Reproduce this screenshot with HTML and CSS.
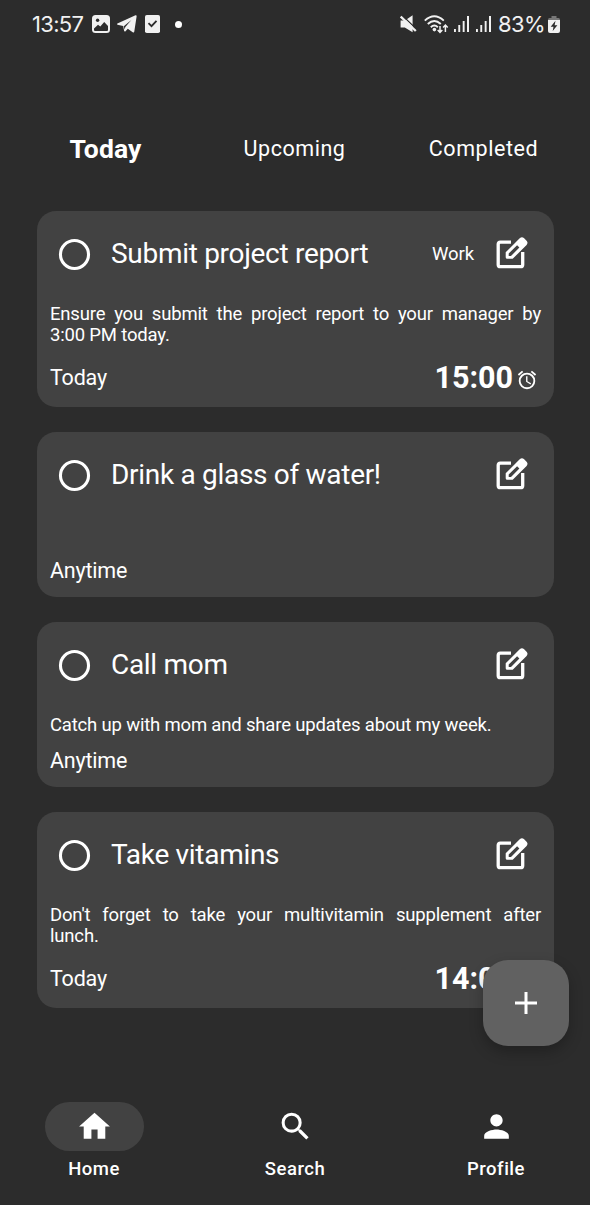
FILE: index.html
```html
<!DOCTYPE html>
<html lang="en">
<head>
<meta charset="utf-8">
<title>Tasks</title>
<link rel="stylesheet" href="styles.css">
</head>
<body>
<svg class="defs" aria-hidden="true">
  <symbol id="ring" viewBox="0 0 24 24"><circle cx="12" cy="12" r="9.1" fill="none" stroke="currentColor" stroke-width="2"/></symbol>
  <symbol id="edit" viewBox="0 0 32 32">
    <path d="M15 5.2H4.3Q2.2 5.2 2.2 7.3V27.7Q2.2 29.7 4.3 29.7H24.6Q26.7 29.7 26.7 27.7V15" fill="none" stroke="currentColor" stroke-width="3.3"/>
    <path fill="currentColor" fill-rule="evenodd" d="M9.7 15.2 23.7 1.2Q25.9-.6 27.9 1L30.8 3.9Q32.3 6 30.6 7.9L16.7 21.8H11.2Q9.7 21.8 9.7 20.3ZM12.7 16.6V18.9H15L23.4 10.5 21.1 8.2Z"/>
  </symbol>
  <symbol id="alarm" viewBox="0 0 24 24"><path fill="currentColor" d="m22 5.72-4.6-3.86-1.29 1.53 4.6 3.86L22 5.72zM7.88 3.39 6.6 1.86 2 5.71l1.29 1.53 4.59-3.85zM12.5 8H11v6l4.75 2.85.75-1.23-4-2.37V8zM12 4a9 9 0 1 0 0 18 9 9 0 0 0 0-18zm0 16a7 7 0 1 1 0-14 7 7 0 0 1 0 14z"/></symbol>
</svg>
<div class="screen">
  <header class="status">
    <div class="status-left">
      <span class="clock">13:57</span>
      <svg class="ic-photo" viewBox="0 0 18 18"><rect width="18" height="18" rx="3.5" fill="currentColor"/><circle cx="5.6" cy="5.3" r="1.7" fill="#2c2c2c"/><path d="M2 13.6 6 9.7 8.3 11.6 12.2 7 16 10.9V15Q16 16 15 16H3Q2 16 2 15Z" fill="#2c2c2c"/></svg>
      <svg class="ic-plane" viewBox="0 0 20 18"><path fill="currentColor" d="M.4 8.6 18.5.3Q19.8 0 19.6 1.4L17.3 16.6Q17 18 15.7 17.3L10.8 13.8 8.3 16.4Q7.4 17 7.1 15.8L6.2 11 .5 9.7Q-.4 9.1.4 8.6Z"/><path d="M6.8 11.2 14.4 5.1 8.3 12 7.7 14.5" fill="#2c2c2c"/></svg>
      <svg class="ic-check" viewBox="0 0 15 18"><rect width="15" height="18" rx="1.8" fill="currentColor"/><path d="m3.5 8.2 3 3 5-5.4" fill="none" stroke="#2c2c2c" stroke-width="1.8"/></svg>
      <span class="dot"></span>
    </div>
    <div class="status-right">
      <svg class="ic-mute" viewBox="0 0 17 18"><path fill="currentColor" d="M.6 5.6H5L12.6.3V17.2L4.8 12.6H.6Z"/><path d="M1.8 0 17 14.6" stroke="#2c2c2c" stroke-width="1.3"/><path d="M.7 1.5 15.8 16" stroke="currentColor" stroke-width="2.3"/></svg>
      <svg class="ic-wifi" viewBox="0 0 25 19"><g fill="none" stroke="currentColor" stroke-width="1.9"><path d="M.8 5.6Q10.3-3 19.8 5.6M3.8 9Q10.3 3 16.8 9M6.8 12.2Q10.3 9 13.8 12.2"/><path stroke-width="1.5" d="M16 11v6M13.7 15l2.3 2.4 2.3-2.4M21.4 17v-6M19.1 12.5l2.3-2.4 2.3 2.4"/></g><circle cx="10.4" cy="14.6" r="1.8" fill="currentColor"/></svg>
      <svg class="ic-signal" viewBox="0 0 15 16"><path fill="currentColor" d="M0 13h1.9v3H0zM4.3 9h1.9v7H4.3zM8.7 5h1.9v11H8.7zM13 0h2v16H13z"/></svg>
      <svg class="ic-signal" viewBox="0 0 15 16"><path fill="currentColor" d="M0 13h1.9v3H0zM4.3 9h1.9v7H4.3zM8.7 5h1.9v11H8.7zM13 0h2v16H13z"/></svg>
      <span class="percent">83%</span>
      <svg class="ic-battery" viewBox="0 0 12 17"><path d="M3.5 0h5v2H10.5Q12 2 12 4H0Q0 2 1.5 2h2Z" fill="#777"/><path d="M0 4h12v11Q12 17 10 17H2Q0 17 0 15Z" fill="currentColor"/><path d="M7.5 4.8 2.7 10.7H5.5L4.7 15 9.4 9.3H6.6Z" fill="#2c2c2c"/></svg>
    </div>
  </header>

  <nav class="tabs">
    <span class="tab tab-active">Today</span>
    <span class="tab">Upcoming</span>
    <span class="tab">Completed</span>
  </nav>

  <main class="list">
    <article class="card card-tall">
      <div class="head"><svg class="ring"><use href="#ring"/></svg><h2 class="title">Submit project report</h2><span class="tag">Work</span><svg class="edit"><use href="#edit"/></svg></div>
      <p class="note"><span class="full-line">Ensure you submit the project report to your manager by</span> 3:00 PM today.</p>
      <div class="foot"><span class="when">Today</span><span class="time">15:00</span><svg class="alarm"><use href="#alarm"/></svg></div>
    </article>
    <article class="card">
      <div class="head"><svg class="ring"><use href="#ring"/></svg><h2 class="title">Drink a glass of water!</h2><svg class="edit"><use href="#edit"/></svg></div>
      <p class="note"></p>
      <div class="foot"><span class="when">Anytime</span></div>
    </article>
    <article class="card">
      <div class="head"><svg class="ring"><use href="#ring"/></svg><h2 class="title">Call mom</h2><svg class="edit"><use href="#edit"/></svg></div>
      <p class="note">Catch up with mom and share updates about my week.</p>
      <div class="foot"><span class="when">Anytime</span></div>
    </article>
    <article class="card card-tall">
      <div class="head"><svg class="ring"><use href="#ring"/></svg><h2 class="title">Take vitamins</h2><svg class="edit"><use href="#edit"/></svg></div>
      <p class="note"><span class="full-line">Don't forget to take your multivitamin supplement after</span> lunch.</p>
      <div class="foot"><span class="when">Today</span><span class="time">14:00</span><svg class="alarm"><use href="#alarm"/></svg></div>
    </article>
  </main>

  <button class="fab" aria-label="Add task"><svg class="plus" viewBox="0 0 22 22"><path d="M11 0v22M0 11h22" stroke="currentColor" stroke-width="3"/></svg></button>

  <nav class="bottom">
    <div class="item"><span class="pill pill-active"><svg class="nav-ic" viewBox="0 0 24 24"><path fill="currentColor" d="M10 20v-6h4v6h5v-8h3L12 3 2 12h3v8z"/></svg></span><span class="label">Home</span></div>
    <div class="item"><span class="pill"><svg class="nav-ic" viewBox="0 0 24 24"><path fill="currentColor" d="M15.5 14h-.79l-.28-.27A6.471 6.471 0 0 0 16 9.5 6.5 6.5 0 1 0 9.5 16c1.61 0 3.09-.59 4.23-1.57l.27.28v.79l5 4.99L20.49 19l-4.99-5zm-6 0C7.01 14 5 11.99 5 9.5S7.01 5 9.5 5 14 7.01 14 9.5 11.99 14 9.5 14z"/></svg></span><span class="label">Search</span></div>
    <div class="item"><span class="pill"><svg class="nav-ic" viewBox="0 0 24 24"><path fill="currentColor" d="M12 12c2.21 0 4-1.79 4-4s-1.79-4-4-4-4 1.79-4 4 1.79 4 4 4zm0 2c-2.67 0-8 1.34-8 4v2h16v-2c0-2.66-5.33-4-8-4z"/></svg></span><span class="label">Profile</span></div>
  </nav>
</div>
</body>
</html>
```
FILE: styles.css
```css
* { box-sizing: border-box; }
body { margin: 0; background: #2c2c2c; color: #fff; font-family: Roboto, "Noto Sans", sans-serif; }
svg { display: block; flex: none; }
.defs { position: absolute; width: 0; height: 0; }
.screen { position: relative; width: 590px; height: 1205px; overflow: hidden; display: flex; flex-direction: column; background: #2c2c2c; white-space: nowrap; }

.status { height: 48px; padding: 0 30px 0 32px; display: flex; justify-content: space-between; align-items: center; color: #f1f1f1; font-family: Inter, Roboto, sans-serif; font-size: 22px; line-height: 26px; }
.status-left, .status-right { display: flex; align-items: center; }
.clock { width: 60px; letter-spacing: -0.7px; }
.ic-photo { width: 18px; height: 18px; }
.ic-plane { width: 20px; height: 18px; margin-left: 7px; }
.ic-check { width: 15px; height: 18px; margin-left: 8px; }
.dot { width: 7px; height: 7px; border-radius: 50%; background: #fff; margin-left: 15px; }
.ic-mute { width: 17px; height: 18px; margin-right: 7px; }
.ic-wifi { width: 25px; height: 19px; margin-right: 5px; }
.ic-signal { width: 15px; height: 16px; margin-right: 7px; }
.percent { width: 50px; letter-spacing: -0.6px; }
.ic-battery { width: 12px; height: 17px; }

.tabs { height: 163px; padding: 37px 12px 0 11px; display: grid; grid-template-columns: repeat(3, 1fr); align-items: center; text-align: center; }
.tab { font-size: 21.5px; letter-spacing: 0.55px; }
.tab-active { font-size: 26.5px; font-weight: 700; letter-spacing: 0.1px; }

.list { padding: 0 36.5px 0 37px; display: flex; flex-direction: column; gap: 25.4px; }
.card { height: 164.5px; padding: 0 12.5px 8px 13px; border-radius: 19px; background: #424242; display: flex; flex-direction: column; }
.card-tall { height: 196px; padding-bottom: 12px; }
.head { height: 86px; padding: 0 13px 0 6px; display: flex; align-items: center; flex: none; }
.ring { width: 37px; height: 37px; }
.title { margin: 0 0 0 18px; flex: 1; font-size: 28px; font-weight: 400; line-height: 34px; letter-spacing: -0.3px; }
.tag { font-size: 18.5px; letter-spacing: -0.1px; margin-right: 22px; }
.edit { width: 32px; height: 32px; margin-bottom: 2px; }
.note { margin: 6.8px 0 0; flex: 1; font-size: 18.5px; line-height: 21.5px; letter-spacing: -0.18px; white-space: normal; }
.full-line { display: block; text-align-last: justify; }
.foot { height: 36px; display: flex; align-items: center; flex: none; }
.when { flex: 1; font-size: 21.5px; letter-spacing: -0.2px; }
.time { font-size: 30.5px; font-weight: 700; }
.alarm { width: 22px; height: 22px; margin: 5px 3px 0 3px; }

.fab { position: absolute; left: 483px; top: 960px; width: 86px; height: 86px; padding: 0; border: 0; border-radius: 25px; background: #616161; color: #fff; display: flex; align-items: center; justify-content: center; box-shadow: 0 6px 14px rgba(0,0,0,.25); }
.plus { width: 22px; height: 22px; }

.bottom { margin: auto 0 0; height: 103px; display: flex; justify-content: center; gap: 102px; }
.item { width: 99px; display: flex; flex-direction: column; align-items: center; }
.pill { width: 99px; height: 49px; border-radius: 25px; display: flex; align-items: center; justify-content: center; }
.pill-active { background: #424242; }
.nav-ic { width: 37px; height: 37px; }
.label { margin-top: 7px; font-size: 18.5px; font-weight: 500; line-height: 22px; letter-spacing: 0.5px; }
```
